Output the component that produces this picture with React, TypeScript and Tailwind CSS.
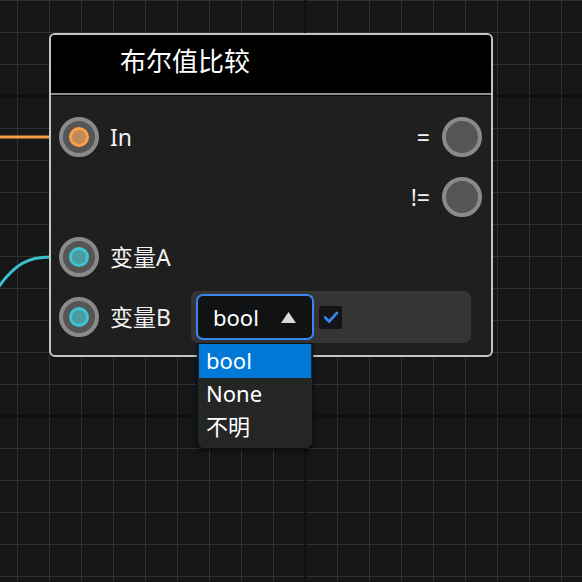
import React from "react";

const font = "font-['Noto_Sans','Noto_Sans_CJK_SC',sans-serif]";

function Socket({ color }: { color?: "orange" | "cyan" }) {
  return (
    <div className="flex h-[40px] w-[40px] shrink-0 items-center justify-center rounded-full border-[4px] border-[#8a8a8a] bg-[#555555]">
      {color === "orange" && (
        <div className="h-[20px] w-[20px] rounded-full border-[3px] border-[#ffa047] bg-[#c08a5a]" />
      )}
      {color === "cyan" && (
        <div className="h-[20px] w-[20px] rounded-full border-[3px] border-[#3cc5d2] bg-[#4b9ca2]" />
      )}
    </div>
  );
}

function TypeSelect() {
  const options = ["bool", "None", "不明"];
  return (
    <div className="relative">
      <div className="flex h-[46px] w-[118px] items-center justify-between rounded-[7px] border-2 border-[#3a86f0] bg-[#111214] pl-[15px] pr-[16px]">
        <span className="text-[22px] leading-none text-white">bool</span>
        <svg width="15" height="11" viewBox="0 0 15 11">
          <polygon points="7.5,0 15,11 0,11" fill="#d9d9d9" />
        </svg>
      </div>

      {/* open list */}
      <div className="absolute left-[1px] top-[49px] z-10 w-[116px] rounded-b-[7px] border border-[#101112] bg-[#242626] px-[1px] pb-[4px] shadow-[0_2px_4px_rgba(0,0,0,0.6)]">
        {options.map((opt, i) => (
          <div
            key={opt}
            className={`flex items-center pb-[3px] pl-[7px] text-[22px] leading-none text-white ${
              i === 0 ? "h-[34px] bg-[#0078d7]" : "h-[33px]"
            }`}
          >
            {opt}
          </div>
        ))}
      </div>
    </div>
  );
}

export default function App() {
  return (
    <div
      className={`relative h-[582px] w-[582px] overflow-hidden bg-[#151618] ${font} bg-[linear-gradient(to_right,#0e0f10_2px,transparent_2px),linear-gradient(to_bottom,#0e0f10_2px,transparent_2px),linear-gradient(to_right,#2f3032_1px,transparent_1px),linear-gradient(to_bottom,#2f3032_1px,transparent_1px)] bg-[size:320px_320px,320px_320px,32px_32px,32px_32px] bg-[position:304px_0,0_95px,17px_0,0_0]`}
    >
      {/* wires */}
      <svg className="absolute left-0 top-0" width="582" height="582">
        <line x1="0" y1="137" x2="50" y2="137" stroke="#f5a048" strokeWidth="3" />
        <path d="M -5 292 C 15 262, 30 257, 50 257" stroke="#3cc0cd" strokeWidth="3" fill="none" />
      </svg>

      {/* node */}
      <div className="absolute left-[49px] top-[33px] flex h-[324px] w-[444px] flex-col rounded-[6px] border-2 border-[#c4c4c4] bg-[#1f1f1f]">
        <div className="flex h-[60px] items-center rounded-t-[4px] border-b-2 border-[#8f8f8f] bg-black pb-[6px] pl-[69px]">
          <span className="text-[26px] leading-none text-white">布尔值比较</span>
        </div>

        <div className="flex flex-1 flex-col border-t border-black pb-[8px] pl-[8px] pr-[9px] pt-[11px] text-[23px] leading-none text-[#f2f2f2]">
          <div className="flex h-[60px] items-center justify-between">
            <div className="flex items-center">
              <Socket color="orange" />
              <span className="ml-[11px]">In</span>
            </div>
            <div className="flex items-center gap-[12px]">
              <span>=</span>
              <Socket />
            </div>
          </div>

          <div className="flex h-[60px] items-center justify-end gap-[12px]">
            <span>!=</span>
            <Socket />
          </div>

          <div className="flex h-[60px] items-center">
            <Socket color="cyan" />
            <span className="ml-[11px]">变量A</span>
          </div>

          <div className="flex h-[60px] items-center">
            <Socket color="cyan" />
            <span className="w-[92px] pl-[11px]">变量B</span>
            <div className="flex h-[52px] w-[280px] items-center gap-[5px] rounded-[7px] bg-[#353535] pl-[5px]">
              <TypeSelect />
              <div className="flex h-[23px] w-[23px] items-center justify-center rounded-[2px] bg-[#141516]">
                <svg width="18" height="18" viewBox="0 0 24 24">
                  <polyline points="4,12.5 9.5,18 20,6.5" fill="none" stroke="#3a86f0" strokeWidth="3.5" strokeLinecap="round" strokeLinejoin="round" />
                </svg>
              </div>
            </div>
          </div>
        </div>
      </div>
    </div>
  );
}
